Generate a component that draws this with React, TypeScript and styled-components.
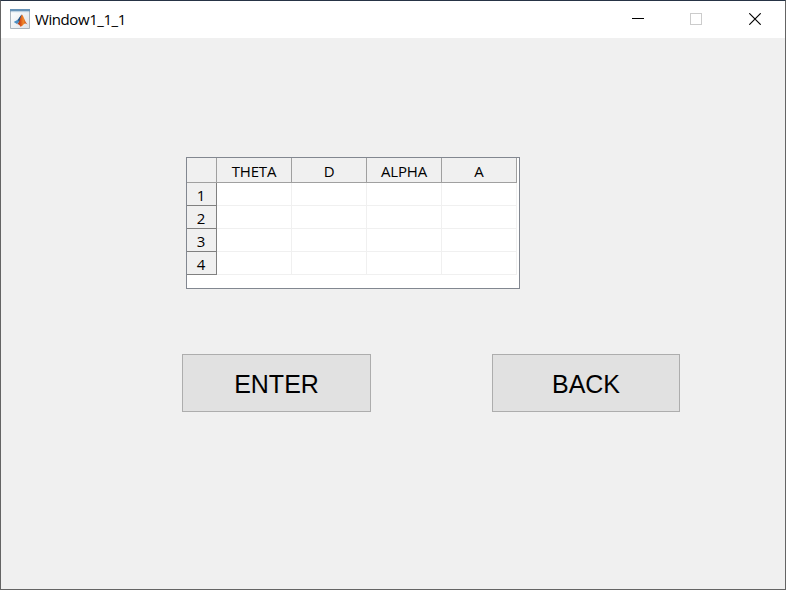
import React from 'react';
import styled, { createGlobalStyle } from 'styled-components';

const GlobalStyle = createGlobalStyle`
  *, *::before, *::after { box-sizing: border-box; }
  body { margin: 0; overflow: hidden; background: #f0f0f0; }
`;

const Frame = styled.div`
  display: flex;
  flex-direction: column;
  width: 786px;
  height: 590px;
  border: 1px solid #646464;
  border-top-color: #263345;
  background: #f0f0f0;
  color: #000;
  font-family: 'Open Sans', 'Noto Sans', sans-serif;
`;

const TitleBar = styled.header`
  display: flex;
  align-items: center;
  height: 37px;
  flex: none;
  padding: 0 0 1px 9px;
  background: #fff;
`;

const Title = styled.h1`
  flex: 1;
  margin: 0 0 0 5px;
  font-size: 15px;
  font-weight: 400;
  line-height: 20px;
  letter-spacing: -0.42px;
`;

const CaptionButtons = styled.div`
  display: flex;
`;

const Caption = styled.button<{ $dim?: boolean }>`
  display: flex;
  align-items: center;
  justify-content: center;
  width: 58px;
  height: 36px;
  padding: 0;
  border: 0;
  background: none;
  color: ${(p) => (p.$dim ? '#cccccc' : '#000')};

  &:last-child { width: 60px; }
`;

const Client = styled.main`
  flex: 1;
  padding: 119px 0 0 181px;
`;

const Table = styled.div`
  width: 334px;
  height: 132px;
  margin-left: 4px;
  border: 1px solid #828790;
  background: #fff;
`;

const Row = styled.div<{ $header?: boolean }>`
  display: grid;
  grid-template-columns: 30px repeat(4, 75px);
  grid-template-rows: ${(p) => (p.$header ? 25 : 23)}px;
`;

const HeadCell = styled.div`
  border: solid #a0a0a0;
  border-width: 0 1px 1px 0;
  background: #f0f0f0;
  font-size: 15px;
  line-height: 26px;
  letter-spacing: -0.2px;
  text-align: center;
`;

const RowCell = styled(HeadCell)`
  border-color: #808080;
  line-height: 24px;
  padding-right: 1px;
`;

const Cell = styled.div`
  border: solid #f0f0f0;
  border-width: 0 1px 1px 0;
`;

const Actions = styled.div`
  display: flex;
  gap: 121px;
  margin-top: 65px;
`;

const PushButton = styled.button<{ $width: number }>`
  width: ${(p) => p.$width}px;
  height: 58px;
  padding: 2px 0 0;
  border: 1px solid #adadad;
  border-radius: 0;
  background: #e1e1e1;
  color: #000;
  font: 25px/30px 'Liberation Sans', Arial, sans-serif;
`;

const AppIcon = () => (
  <svg width="20" height="20" viewBox="0 0 20 20">
    <defs>
      <linearGradient id="page" x2="1" y2="1">
        <stop stopColor="#fff" />
        <stop offset="1" stopColor="#dde3ea" />
      </linearGradient>
      <linearGradient id="peak">
        <stop stopColor="#8c1f12" />
        <stop offset=".35" stopColor="#d9541a" />
        <stop offset=".6" stopColor="#f08a2c" />
        <stop offset="1" stopColor="#b8371a" />
      </linearGradient>
    </defs>
    <path d="M.5.5h19v19H.5z" fill="url(#page)" stroke="#a9b3bd" />
    <path d="M0 0h20v2.4H0z" fill="#6793b8" />
    <path d="M1 2.4h18v.8H1z" fill="#bdd2e3" />
    <g transform="translate(.7 .6)">
      <path d="M3 12.3 7 10.2C8.3 9.4 9.3 5.8 11.3 4.8L9.2 12 6.2 14.5z" fill="#4b8fc4" />
      <path d="M7 10.2C8.3 9.4 9.3 5.8 11.3 4.8L8.8 12.4z" fill="#2a5585" />
      <path d="M6.2 14.5C8.8 13.8 9.7 7 11.3 4.8c1.6 1.4 2.9 7.1 5.5 10-1.8-1.2-2.9-1-4 .2-1.2 1.3-2.1 2.1-3.1 2.2-.3-1.5-1.4-2.4-3.5-2.7z" fill="url(#peak)" />
    </g>
  </svg>
);

const columns = ['THETA', 'D', 'ALPHA', 'A'];
const rows = [1, 2, 3, 4];

export default function App() {
  return (
    <>
      <GlobalStyle />
      <Frame>
        <TitleBar>
          <AppIcon />
          <Title>Window1_1_1</Title>
          <CaptionButtons>
            <Caption aria-label="Minimize">
              <svg width="12" height="12" shapeRendering="crispEdges">
                <path d="M0 5h12v1H0z" fill="currentColor" />
              </svg>
            </Caption>
            <Caption aria-label="Maximize" $dim>
              <svg width="12" height="12" shapeRendering="crispEdges">
                <path d="M.5.5h11v11H.5z" fill="none" stroke="currentColor" />
              </svg>
            </Caption>
            <Caption aria-label="Close">
              <svg width="12" height="12">
                <path d="m.3.3 11.4 11.4M11.7.3.3 11.7" stroke="currentColor" strokeWidth="1.15" />
              </svg>
            </Caption>
          </CaptionButtons>
        </TitleBar>
        <Client>
          <Table>
            <Row $header>
              <HeadCell />
              {columns.map((name) => (
                <HeadCell key={name}>{name}</HeadCell>
              ))}
            </Row>
            {rows.map((n) => (
              <Row key={n}>
                <RowCell>{n}</RowCell>
                {columns.map((name) => (
                  <Cell key={name} />
                ))}
              </Row>
            ))}
          </Table>
          <Actions>
            <PushButton $width={189}>ENTER</PushButton>
            <PushButton $width={188}>BACK</PushButton>
          </Actions>
        </Client>
      </Frame>
    </>
  );
}
